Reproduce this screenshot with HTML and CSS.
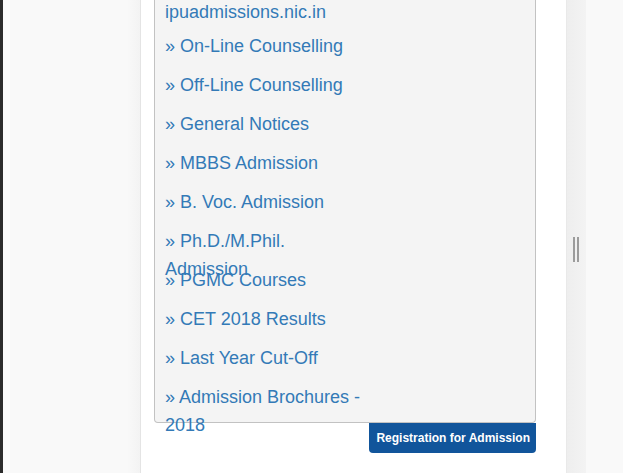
FILE: index.html
```html
<!DOCTYPE html>
<html>
<head>
<meta charset="utf-8">
<link rel="stylesheet" href="styles.css">
</head>
<body>
<div class="frame">
  <div class="edge"></div>
  <div class="gutter"></div>
  <div class="panel">
    <div class="box">
      <a class="site" href="#">ipuadmissions.nic.in</a>
      <ul class="links">
        <li><a href="#">» On-Line Counselling</a></li>
        <li><a href="#">» Off-Line Counselling</a></li>
        <li><a href="#">» General Notices</a></li>
        <li><a href="#">» MBBS Admission</a></li>
        <li><a href="#">» B. Voc. Admission</a></li>
        <li><a href="#">» Ph.D./M.Phil. Admission</a></li>
        <li><a href="#">» PGMC Courses</a></li>
        <li><a href="#">» CET 2018 Results</a></li>
        <li><a href="#">» Last Year Cut-Off</a></li>
        <li><a href="#">» Admission Brochures - 2018</a></li>
      </ul>
    </div>
    <div class="actions">
      <a class="btn" href="#">Registration for Admission</a>
    </div>
  </div>
  <div class="rail"><span class="grip"></span></div>
  <div class="rest"></div>
</div>
</body>
</html>
```
FILE: styles.css
```css
html, body {
  margin: 0;
  padding: 0;
  height: 100%;
  overflow: hidden;
  font-family: "Liberation Sans", Arial, sans-serif;
}
.frame {
  display: flex;
  height: 473px;
  background: #f9f9f9;
}
.edge {
  width: 3px;
  background: #2b2b2b;
}
.gutter {
  width: 137px;
  background: linear-gradient(to right, #f9f9f9 0, #f9f9f9 124px, #f3f3f3 137px);
}
.panel {
  width: 412px;
  background: #ffffff;
  border-left: 1px solid #e4e4e4;
  padding-left: 13px;
  display: flex;
  flex-direction: column;
}
.box {
  width: 360px;
  background: #f4f4f4;
  border: 1px solid #c2c2c2;
  border-top: none;
  border-radius: 0 0 4px 4px;
  padding: 0 10px;
}
.site {
  display: block;
  font-size: 18px;
  line-height: 27px;
  margin-top: -1px;
  margin-bottom: 6px;
  color: #337ab7;
  text-decoration: none;
}
.links {
  list-style: none;
  margin: 0;
  padding: 0;
}
.links li {
  height: 39px;
  width: 200px;
  font-size: 18px;
  line-height: 28px;
}
.links a {
  color: #337ab7;
  text-decoration: none;
}
.actions {
  width: 382px;
  display: flex;
  justify-content: flex-end;
}
.btn {
  display: block;
  background: #11559b;
  color: #ffffff;
  font-weight: bold;
  font-size: 12px;
  line-height: 30px;
  padding: 0 6px 0 7px;
  border-radius: 0 0 4px 4px;
  text-decoration: none;
}
.rail {
  width: 20px;
  border-left: 1px solid #e9e9e9;
  background: linear-gradient(to right, #eeeeee, #f3f3f3);
  display: flex;
  justify-content: center;
  padding-top: 237px;
  box-sizing: border-box;
}
.grip {
  width: 2px;
  height: 25px;
  border-left: 2px solid #9c9c9c;
  border-right: 2px solid #9c9c9c;
  margin-left: -2px;
}
.rest {
  flex: 1;
  background: #f9f9f9;
}
```
